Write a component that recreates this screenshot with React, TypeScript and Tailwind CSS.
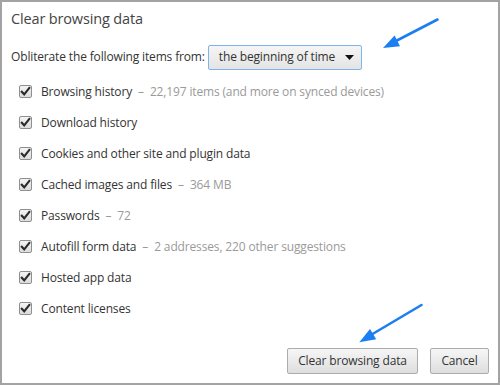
import React from "react";

const items: { label: string; extra?: string }[] = [
  { label: "Browsing history", extra: "22,197 items (and more on synced devices)" },
  { label: "Download history" },
  { label: "Cookies and other site and plugin data" },
  { label: "Cached images and files", extra: "364 MB" },
  { label: "Passwords", extra: "72" },
  { label: "Autofill form data", extra: "2 addresses, 220 other suggestions" },
  { label: "Hosted app data" },
  { label: "Content licenses" },
];

function Check() {
  return (
    <div className="w-[13px] h-[13px] border border-[#8e8f8f] rounded-[2px] bg-gradient-to-b from-[#f4f4f4] to-[#dcdcdc] flex items-center justify-center shrink-0">
      <svg width="11" height="11" viewBox="0 0 11 11">
        <path d="M1.8 5.8 L4.2 8.3 L9.3 2" fill="none" stroke="#2a2a2a" strokeWidth="2.1" strokeLinecap="square" />
      </svg>
    </div>
  );
}

export default function App() {
  return (
    <div className="w-[500px] h-[385px] border-2 border-[#a3a3a3] bg-white relative text-[#333] font-['Open_Sans',sans-serif] tracking-[-0.15px] flex flex-col overflow-hidden">
      <div className="pt-[7px] pl-[9px] h-[27px] leading-[20px] text-[14.5px] text-[#444]">Clear browsing data</div>
      <div className="mt-[16px] pl-[9px] h-[24px] flex items-center text-[12px]">
        <span>Obliterate the following items from:</span>
        <div className="ml-[3px] w-[154px] h-[25px] border border-[#7eb4ea] rounded-[2px] bg-gradient-to-b from-[#f5f5f5] to-[#e4e4e4] flex items-center pl-[10px] pr-[7px]">
          <span className="flex-1">the beginning of time</span>
          <svg width="9" height="5" viewBox="0 0 9 5">
            <path d="M0 0 L9 0 L4.5 5 Z" fill="#111" />
          </svg>
        </div>
      </div>
      <div className="mt-[7px] flex flex-col">
        {items.map((it) => (
          <div key={it.label} className="h-[31px] flex items-center pl-[17px] text-[12px]">
            <Check />
            <span className="ml-[9px]">{it.label}</span>
            {it.extra && (
              <span className="text-[#9a9a9a] ml-[6px]">
                <span className="mr-[6px]">–</span>
                {it.extra}
              </span>
            )}
          </div>
        ))}
      </div>
      <div className="mt-[24px] flex justify-end pr-[9px] gap-[12px] text-[12px]">
        <button className="w-[131px] h-[26px] border border-[#acacac] rounded-[2px] bg-gradient-to-b from-[#f6f6f6] to-[#dedede] text-[#333]">
          Clear browsing data
        </button>
        <button className="w-[59px] h-[26px] border border-[#acacac] rounded-[2px] bg-gradient-to-b from-[#f6f6f6] to-[#dedede] text-[#333]">
          Cancel
        </button>
      </div>
      <svg className="absolute left-[-2px] top-[-2px] pointer-events-none" width="500" height="385">
        <line x1="437.5" y1="19.5" x2="394" y2="42" stroke="#1b7ef2" strokeWidth="2.6" strokeLinecap="round" />
        <path d="M383 48 L400 46.2 L394.6 35.4 Z" fill="#1b7ef2" />
        <line x1="421.5" y1="305" x2="370" y2="335.5" stroke="#1b7ef2" strokeWidth="2.6" strokeLinecap="round" />
        <path d="M359.3 342.3 L376.2 339.3 L370 329 Z" fill="#1b7ef2" />
      </svg>
    </div>
  );
}
